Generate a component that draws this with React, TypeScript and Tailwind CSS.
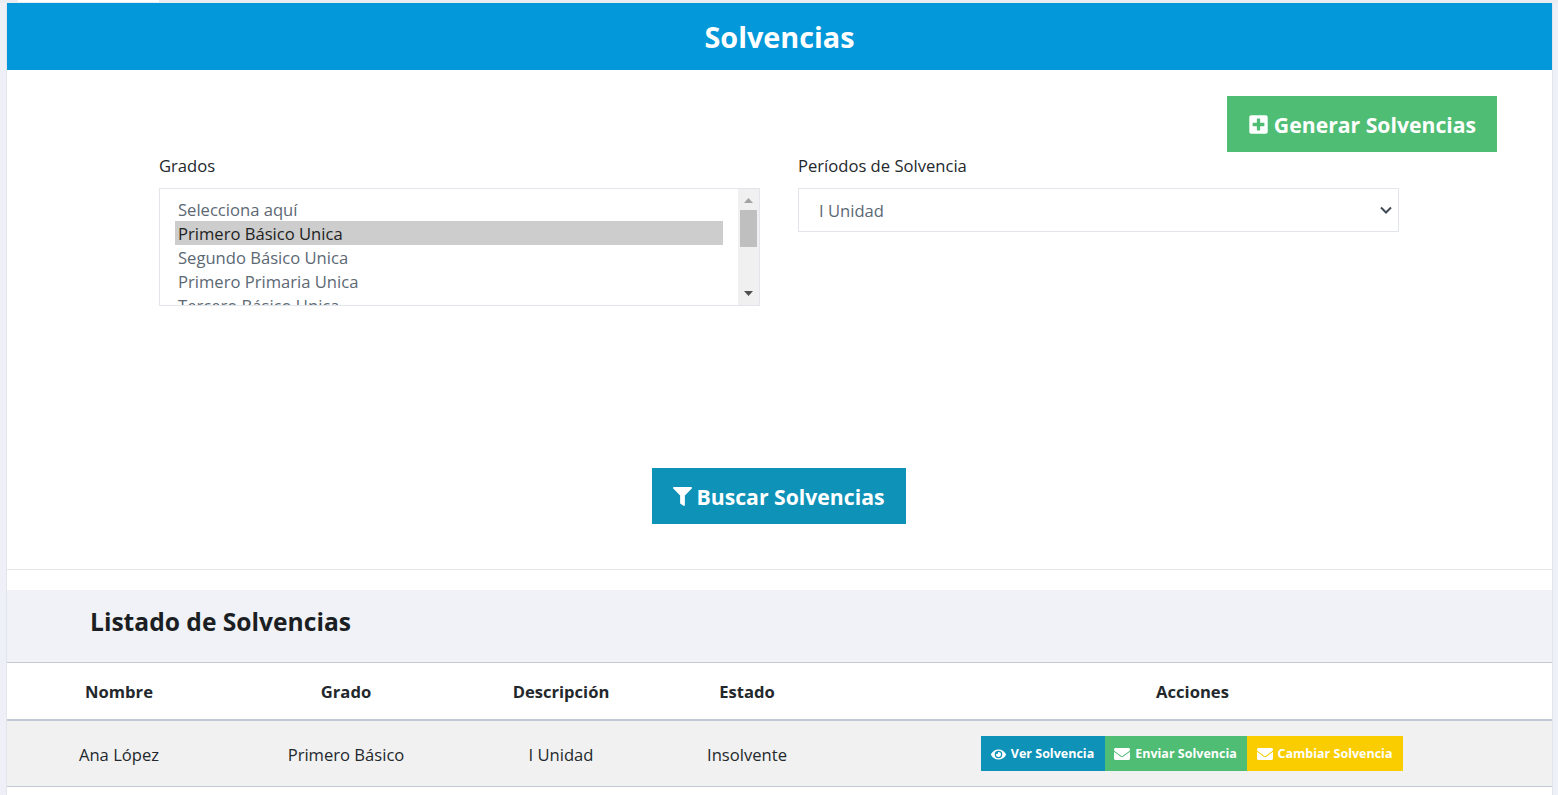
import React from "react";
import { FaPlusSquare, FaFilter, FaEye, FaEnvelope } from "react-icons/fa";

const font = { fontFamily: '"Open Sans", "Noto Sans", sans-serif' };

function ListOption({ label, selected }: { label: string; selected?: boolean }) {
  return (
    <div className={selected ? "h-6 pl-[3px] leading-[26px] bg-[#cdcdcd] text-[#222]" : "h-6 pl-[3px] leading-[26px] text-[#5c6873]"}>
      {label}
    </div>
  );
}

function ActionButton({ color, width, icon, label }: { color: string; width: string; icon: React.ReactNode; label: string }) {
  return (
    <span className={`${color} ${width} h-[35px] pt-[2px] flex items-center justify-center gap-[5px] text-white text-[12.5px] font-bold whitespace-nowrap`}>
      {icon}
      <span className="pt-[1px]">{label}</span>
    </span>
  );
}

export default function App() {
  return (
    <div className="h-[795px] overflow-hidden bg-[#edf0f6] text-[16.6px] text-[#23282c]" style={font}>
      <div className="h-[3px] pl-[18px] bg-[#e9ecf1]">
        <div className="h-[2px] w-[141px] bg-white" />
      </div>
      <div className="ml-[6px] mr-[5px] border-x border-[#e2e6ec] bg-white h-[792px]">
        <div className="h-[67px] pt-[1px] bg-[#0398d9] flex items-center justify-center text-white text-[28.8px] font-bold">
          Solvencias
        </div>
        <div className="h-[56px] mt-[26px] flex justify-end pr-[55px]">
          <button className="w-[270px] h-[56px] bg-[#4fbd74] text-white text-[21.2px] font-bold flex items-center justify-center gap-[5px]">
            <FaPlusSquare className="w-[21px] h-[21px]" />
            <span className="pt-[1px]">Generar Solvencias</span>
          </button>
        </div>
        <div className="pl-[152px] pr-[153px] grid grid-cols-[601px_601px] gap-x-[38px] mt-[1px]">
          <div>
            <label className="block h-[35px] leading-[26px]">Grados</label>
            <div className="h-[118px] border border-[#e2e6ea] flex overflow-hidden">
              <div className="flex-1 pl-[15px] pr-[15px] pt-[8px] h-[116px] overflow-hidden">
                <ListOption label="Selecciona aquí" />
                <ListOption label="Primero Básico Unica" selected />
                <ListOption label="Segundo Básico Unica" />
                <ListOption label="Primero Primaria Unica" />
                <ListOption label="Tercero Básico Unica" />
              </div>
              <div className="w-[21px] bg-[#f0f0f0] flex flex-col items-center relative">
                <svg width="9" height="5" viewBox="0 0 9 5" className="mt-[9px]"><path d="M4.5 0L9 5H0z" fill="#a3a3a3" /></svg>
                <div className="w-[17px] h-[37px] bg-[#bfbfbf] mt-[7px]" />
                <svg width="9" height="5" viewBox="0 0 9 5" className="absolute bottom-[9px]"><path d="M0 0H9L4.5 5z" fill="#505050" /></svg>
              </div>
            </div>
          </div>
          <div>
            <label className="block h-[35px] leading-[26px]">Períodos de Solvencia</label>
            <div className="h-[44px] border border-[#e2e6ea] pl-5 pr-[6px] flex items-center justify-between text-[#5c6873]">
              <span className="pt-[2px]">I Unidad</span>
              <svg width="12" height="8" viewBox="0 0 12 8"><path d="M1 1.5L6 6.5L11 1.5" fill="none" stroke="#3f4a54" strokeWidth="2" /></svg>
            </div>
          </div>
        </div>
        <div className="flex justify-center mt-[162px]">
          <button className="w-[254px] h-[56px] bg-[#0f92b8] text-white text-[21.2px] font-bold flex items-center justify-center gap-[5px] -translate-x-px">
            <FaFilter className="w-[19px] h-[19px]" />
            <span className="pt-[1px]">Buscar Solvencias</span>
          </button>
        </div>
        <div className="h-px bg-[#e4e6e9] mt-[45px]" />
        <div className="h-[20px]" />
        <div className="h-[73px] pb-[8px] bg-[#f0f2f7] border-b border-[#c2c8d6] pl-[83px] flex items-center text-[24.6px] font-bold text-[#1b1f23]">
          Listado de Solvencias
        </div>
        <table className="w-full border-separate border-spacing-0 table-fixed text-center">
          <colgroup>
            <col className="w-[224px]" />
            <col className="w-[230px]" />
            <col className="w-[200px]" />
            <col className="w-[172px]" />
            <col />
          </colgroup>
          <thead>
            <tr className="font-bold">
              <th className="h-[58px] pt-[2px] border-b-2 border-[#c2c8d6]">Nombre</th>
              <th className="h-[58px] pt-[2px] border-b-2 border-[#c2c8d6]">Grado</th>
              <th className="h-[58px] pt-[2px] border-b-2 border-[#c2c8d6]">Descripción</th>
              <th className="h-[58px] pt-[2px] border-b-2 border-[#c2c8d6]">Estado</th>
              <th className="h-[58px] pt-[2px] border-b-2 border-[#c2c8d6]">Acciones</th>
            </tr>
          </thead>
          <tbody>
            <tr className="bg-[#f1f1f1]">
              <td className="h-[66px] pt-[3px] border-b border-[#c2c8d6]">Ana López</td>
              <td className="h-[66px] pt-[3px] border-b border-[#c2c8d6]">Primero Básico</td>
              <td className="h-[66px] pt-[3px] border-b border-[#c2c8d6]">I Unidad</td>
              <td className="h-[66px] pt-[3px] border-b border-[#c2c8d6]">Insolvente</td>
              <td className="h-[66px] border-b border-[#c2c8d6]">
                <div className="flex justify-center -mt-[1px] pr-[2px]">
                  <ActionButton color="bg-[#0f92b8]" width="w-[124px]" icon={<FaEye className="w-[15px] h-[15px]" />} label="Ver Solvencia" />
                  <ActionButton color="bg-[#4fbd74]" width="w-[142px]" icon={<FaEnvelope className="w-[16px] h-[16px]" />} label="Enviar Solvencia" />
                  <ActionButton color="bg-[#f9cd00]" width="w-[156px]" icon={<FaEnvelope className="w-[16px] h-[16px]" />} label="Cambiar Solvencia" />
                </div>
              </td>
            </tr>
          </tbody>
        </table>
      </div>
    </div>
  );
}
